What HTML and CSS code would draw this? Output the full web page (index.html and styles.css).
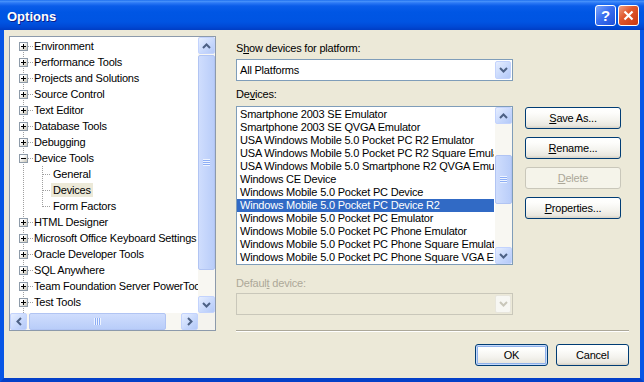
FILE: index.html
```html
<!DOCTYPE html>
<html lang="en">
<head>
    <meta charset="UTF-8">
    <title>Options</title>
    <link rel="stylesheet" href="styles.css">
</head>
<body>
<div class="window">
    <div class="titlebar">
        <span class="title">Options</span>
        <span class="cap-btn help">?</span>
        <span class="cap-btn close">
            <svg width="11" height="11" viewBox="0 0 11 11"><path d="M1.5 1.5 L9.5 9.5 M9.5 1.5 L1.5 9.5" stroke="#fff" stroke-width="2.2" fill="none"/></svg>
        </span>
    </div>

    <div class="frame">
        <!-- category tree -->
        <div class="tree">
            <div class="tree-nodes">
                <div class="node"><span class="exp"></span><span class="label">Environment</span></div>
                <div class="node"><span class="exp"></span><span class="label">Performance Tools</span></div>
                <div class="node"><span class="exp"></span><span class="label">Projects and Solutions</span></div>
                <div class="node"><span class="exp"></span><span class="label">Source Control</span></div>
                <div class="node"><span class="exp"></span><span class="label">Text Editor</span></div>
                <div class="node"><span class="exp"></span><span class="label">Database Tools</span></div>
                <div class="node"><span class="exp"></span><span class="label">Debugging</span></div>
                <div class="node"><span class="exp open"></span><span class="label">Device Tools</span></div>
                <div class="node child"><span class="label">General</span></div>
                <div class="node child"><span class="label selected">Devices</span></div>
                <div class="node child last"><span class="label">Form Factors</span></div>
                <div class="node"><span class="exp"></span><span class="label">HTML Designer</span></div>
                <div class="node"><span class="exp"></span><span class="label">Microsoft Office Keyboard Settings</span></div>
                <div class="node"><span class="exp"></span><span class="label">Oracle Developer Tools</span></div>
                <div class="node"><span class="exp"></span><span class="label">SQL Anywhere</span></div>
                <div class="node"><span class="exp"></span><span class="label">Team Foundation Server PowerTools</span></div>
                <div class="node"><span class="exp"></span><span class="label">Test Tools</span></div>
            </div>
            <div class="vscroll">
                <span class="sb-btn"><svg width="9" height="6" viewBox="0 0 9 6"><polyline points="1,5 4.5,1.5 8,5" fill="none" stroke="#4D6185" stroke-width="2"/></svg></span>
                <span class="thumb"></span>
                <span class="sb-btn"><svg width="9" height="6" viewBox="0 0 9 6"><polyline points="1,1 4.5,4.5 8,1" fill="none" stroke="#4D6185" stroke-width="2"/></svg></span>
            </div>
            <div class="hscroll">
                <span class="sb-btn"><svg width="6" height="9" viewBox="0 0 6 9"><polyline points="5,1 1.5,4.5 5,8" fill="none" stroke="#4D6185" stroke-width="2"/></svg></span>
                <span class="thumb"></span>
                <span class="sb-btn"><svg width="6" height="9" viewBox="0 0 6 9"><polyline points="1,1 4.5,4.5 1,8" fill="none" stroke="#4D6185" stroke-width="2"/></svg></span>
            </div>
            <div class="corner"></div>
        </div>

        <!-- device settings -->
        <div class="side">
            <div class="field-label">S<u>h</u>ow devices for platform:</div>
            <div class="combo">
                <span class="combo-text">All Platforms</span>
                <span class="drop"><svg width="9" height="6" viewBox="0 0 9 6"><polyline points="1,1 4.5,4.5 8,1" fill="none" stroke="#4D6185" stroke-width="2"/></svg></span>
            </div>

            <div class="field-label gap-devices">De<u>v</u>ices:</div>
            <div class="devices-row">
                <div class="listbox">
                    <div class="list-items">
                        <div class="item">Smartphone 2003 SE Emulator</div>
                        <div class="item">Smartphone 2003 SE QVGA Emulator</div>
                        <div class="item">USA Windows Mobile 5.0 Pocket PC R2 Emulator</div>
                        <div class="item">USA Windows Mobile 5.0 Pocket PC R2 Square Emulator</div>
                        <div class="item">USA Windows Mobile 5.0 Smartphone R2 QVGA Emulator</div>
                        <div class="item">Windows CE Device</div>
                        <div class="item">Windows Mobile 5.0 Pocket PC Device</div>
                        <div class="item selected">Windows Mobile 5.0 Pocket PC Device R2</div>
                        <div class="item">Windows Mobile 5.0 Pocket PC Emulator</div>
                        <div class="item">Windows Mobile 5.0 Pocket PC Phone Emulator</div>
                        <div class="item">Windows Mobile 5.0 Pocket PC Phone Square Emulator</div>
                        <div class="item">Windows Mobile 5.0 Pocket PC Phone Square VGA Emulator</div>
                    </div>
                    <div class="vscroll">
                        <span class="sb-btn"><svg width="9" height="6" viewBox="0 0 9 6"><polyline points="1,5 4.5,1.5 8,5" fill="none" stroke="#4D6185" stroke-width="2"/></svg></span>
                        <span class="thumb"></span>
                        <span class="sb-btn"><svg width="9" height="6" viewBox="0 0 9 6"><polyline points="1,1 4.5,4.5 8,1" fill="none" stroke="#4D6185" stroke-width="2"/></svg></span>
                    </div>
                </div>
                <div class="btn-col">
                    <button class="btn"><u>S</u>ave As...</button>
                    <button class="btn"><u>R</u>ename...</button>
                    <button class="btn" disabled><u>D</u>elete</button>
                    <button class="btn"><u>P</u>roperties...</button>
                </div>
            </div>

            <div class="field-label disabled gap-default">Defaul<u>t</u> device:</div>
            <div class="combo disabled">
                <span class="combo-text"></span>
                <span class="drop"><svg width="9" height="6" viewBox="0 0 9 6"><polyline points="1,1 4.5,4.5 8,1" fill="none" stroke="#C9C7BA" stroke-width="2"/></svg></span>
            </div>

            <div class="separator"></div>
            <div class="footer">
                <button class="btn small default">OK</button>
                <button class="btn small">Cancel</button>
            </div>
        </div>
    </div>
</div>
</body>
</html>
```

FILE: styles.css
```css
* {
    box-sizing: border-box;
}
body {
    margin: 0;
    font-family: "Liberation Sans", Arial, sans-serif;
    font-size: 11px;
    letter-spacing: -0.2px;
    color: #000;
    background: #fff;
}
.window {
    width: 644px;
    height: 382px;
    display: flex;
    flex-direction: column;
}

/* title bar */
.titlebar {
    height: 30px;
    flex: none;
    display: flex;
    align-items: center;
    padding: 0 5px 0 7px;
    background: linear-gradient(to bottom, #0B5EE9 0px, #4C96FC 1px, #2B78F5 3px, #0A5CE9 6px, #0056E4 12px, #0054E2 22px, #0048D4 27px, #003DC3 30px);
}
.title {
    flex: 1;
    color: #fff;
    font-weight: bold;
    font-size: 13px;
    letter-spacing: 0;
    padding-top: 2px;
    text-shadow: 1px 1px 0 #0A1E8C;
}
.cap-btn {
    width: 21px;
    height: 21px;
    border: 1px solid #fff;
    border-radius: 3px;
    display: flex;
    align-items: center;
    justify-content: center;
}
.help {
    margin-right: 2px;
    color: #fff;
    font-weight: bold;
    font-size: 15px;
    background: linear-gradient(135deg, #7EA6FA 0%, #3A6FF0 45%, #1E4FD8 100%);
}
.close {
    background: linear-gradient(135deg, #EFA083 0%, #E0582E 40%, #C9370F 100%);
}

/* window body */
.frame {
    flex: 1;
    display: flex;
    gap: 20px;
    background: #ECE9D8;
    border: 4px solid #0756E6;
    border-top: 0;
    border-bottom-color: #0440C8;
    padding: 6px 11px 0 5px;
}

/* tree view */
.tree {
    width: 207px;
    height: 295px;
    flex: none;
    border: 1px solid #8C9AAB;
    background: #fff;
    display: grid;
    grid-template-columns: 1fr 17px;
    grid-template-rows: 1fr 17px;
}
.tree-nodes {
    overflow: hidden;
    padding-top: 1px;
    white-space: nowrap;
    background: repeating-linear-gradient(to bottom, #A0A0A0 0 1px, transparent 1px 2px) 13px 9px / 1px 100% no-repeat;
}
.node {
    height: 16px;
    display: flex;
    align-items: center;
    padding-left: 9px;
    background: repeating-linear-gradient(to right, #A0A0A0 0 1px, transparent 1px 2px) 14px 8px / 9px 1px no-repeat;
}
.exp {
    width: 9px;
    height: 9px;
    flex: none;
    border: 1px solid #8E9BA9;
    background:
        linear-gradient(#000, #000) center / 5px 1px no-repeat,
        linear-gradient(#000, #000) center / 1px 5px no-repeat,
        linear-gradient(135deg, #fff 30%, #C8C4B6);
}
.exp.open {
    background:
        linear-gradient(#000, #000) center / 5px 1px no-repeat,
        linear-gradient(135deg, #fff 30%, #C8C4B6);
}
.node .label {
    margin-left: 4px;
    padding: 0 2px;
    line-height: 14px;
}
.node.child {
    padding-left: 41px;
    background:
        repeating-linear-gradient(to bottom, #A0A0A0 0 1px, transparent 1px 2px) 32px 0 / 1px 16px no-repeat,
        repeating-linear-gradient(to right, #A0A0A0 0 1px, transparent 1px 2px) 33px 8px / 8px 1px no-repeat;
}
.node.child.last {
    background:
        repeating-linear-gradient(to bottom, #A0A0A0 0 1px, transparent 1px 2px) 32px 0 / 1px 9px no-repeat,
        repeating-linear-gradient(to right, #A0A0A0 0 1px, transparent 1px 2px) 33px 8px / 8px 1px no-repeat;
}
.node.child .label {
    margin-left: 0;
}
.label.selected {
    background: #ECE9D8;
}

/* scroll bars */
.vscroll,
.hscroll {
    display: flex;
    background: #F8F7F2;
}
.vscroll {
    flex-direction: column;
    width: 17px;
}
.hscroll {
    align-items: center;
}
.sb-btn {
    width: 17px;
    height: 17px;
    flex: none;
    display: flex;
    align-items: center;
    justify-content: center;
    border: 1px solid #C3D3FD;
    border-radius: 2px;
    background: linear-gradient(135deg, #E6EEFF 0%, #C6D7FC 60%, #B4C9F8 100%);
}
.vscroll .sb-btn:last-child {
    margin-top: auto;
}
.hscroll .sb-btn:last-child {
    margin-left: auto;
}
.thumb {
    flex: none;
    border: 1px solid #B1C4F3;
    border-radius: 2px;
    background-color: #C5D6FC;
}
.vscroll .thumb {
    background:
        repeating-linear-gradient(to bottom, #EEF4FF 0 1px, #8DAEF5 1px 2px) center / 7px 7px no-repeat,
        linear-gradient(to right, #CFDDFD, #B9CDF9);
}
.hscroll .thumb {
    height: 17px;
    width: 137px;
    margin-left: 2px;
    background:
        repeating-linear-gradient(to right, #EEF4FF 0 1px, #8DAEF5 1px 2px) center / 7px 7px no-repeat,
        linear-gradient(to bottom, #CFDDFD, #B9CDF9);
}
.tree .vscroll .thumb {
    height: 215px;
    margin-top: 1px;
}
.corner {
    background: #F4F3EE;
}

/* right side */
.side {
    width: 393px;
    display: flex;
    flex-direction: column;
}
.field-label {
    line-height: 13px;
    margin-top: 6px;
}
.field-label.gap-devices {
    margin-top: 7px;
}
.field-label.gap-default {
    margin-top: 12px;
}
.field-label.disabled {
    color: #ACA899;
}
.combo {
    width: 277px;
    height: 22px;
    margin-top: 4px;
    border: 1px solid #7F9DB9;
    background: #fff;
    display: flex;
    align-items: center;
    padding: 1px;
}
.combo.disabled {
    margin-top: 3px;
    border-color: #C9C7BA;
    background: #ECE9D8;
}
.combo-text {
    flex: 1;
    padding-left: 2px;
}
.drop {
    width: 16px;
    height: 18px;
    display: flex;
    align-items: center;
    justify-content: center;
    border: 1px solid #C3D3FD;
    border-radius: 2px;
    background: linear-gradient(135deg, #E6EEFF 0%, #C6D7FC 60%, #B4C9F8 100%);
}
.combo.disabled .drop {
    border-color: #E8E6DC;
    background: #F7F7F3;
}

.devices-row {
    display: flex;
    margin-top: 5px;
}
.listbox {
    width: 277px;
    height: 159px;
    border: 1px solid #7F9DB9;
    background: #fff;
    display: flex;
}
.list-items {
    flex: 1;
    padding-top: 1px;
    margin-right: 1px;
    overflow: hidden;
    white-space: nowrap;
}
.item {
    height: 13px;
    line-height: 13px;
    padding-left: 3px;
}
.item.selected {
    background: #316AC5;
    color: #fff;
}
.listbox .vscroll .thumb {
    height: 49px;
    margin-top: 31px;
}

.btn-col {
    display: flex;
    flex-direction: column;
    gap: 8px;
    margin-left: 12px;
    padding-top: 1px;
}
.btn {
    width: 96px;
    height: 22px;
    padding: 0;
    font-family: inherit;
    font-size: 11px;
    letter-spacing: -0.2px;
    color: #000;
    border: 1px solid #003C74;
    border-radius: 3px;
    background: linear-gradient(to bottom, #FFFFFF 0%, #FDFDFB 25%, #F4F3EE 60%, #E9E7DF 88%, #D6D0C3 100%);
}
.btn:disabled {
    color: #ACA899;
    border-color: #C9C7BA;
    background: #F5F4EA;
}
.btn.small {
    width: 73px;
}
.btn.default {
    box-shadow: inset 0 0 0 1px #C6DAFB, inset 0 0 0 2px #8FB1EA;
}

.separator {
    margin-top: 15px;
    border-top: 1px solid #ACA899;
    border-bottom: 1px solid #fff;
}
.footer {
    display: flex;
    justify-content: flex-end;
    gap: 8px;
    margin-top: 12px;
}
```
